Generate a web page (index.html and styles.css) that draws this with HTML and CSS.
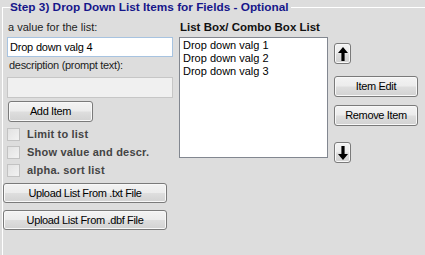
FILE: index.html
```html
<!DOCTYPE html>
<html>
<head>
<meta charset="utf-8">
<link rel="stylesheet" href="styles.css">
</head>
<body>
<div class="group">
  <div class="title">Step 3) Drop Down List Items for Fields - Optional</div>
  <div class="body">
    <div class="left">
      <div class="label lbl-value">a value for the list:</div>
      <input class="textbox" type="text" value="Drop down valg 4">
      <div class="label lbl-desc">description (prompt text):</div>
      <input class="textbox disabled" type="text" value="" disabled>
      <button class="btn btn-add">Add Item</button>
      <div class="checks">
        <div class="check"><span class="box"></span><span class="check-text">Limit to list</span></div>
        <div class="check"><span class="box"></span><span class="check-text">Show value and descr.</span></div>
        <div class="check"><span class="box"></span><span class="check-text">alpha. sort list</span></div>
      </div>
      <button class="btn btn-upload btn-upload-1">Upload List From .txt File</button>
      <button class="btn btn-upload btn-upload-2">Upload List From .dbf File</button>
    </div>
    <div class="right">
      <div class="list-title">List Box/ Combo Box List</div>
      <div class="list-row">
        <ul class="listbox">
          <li>Drop down valg 1</li>
          <li>Drop down valg 2</li>
          <li>Drop down valg 3</li>
        </ul>
        <div class="side">
          <button class="btn arrow arrow-up" aria-label="Move up">
            <svg width="10" height="14" viewBox="0 0 10 14"><polygon points="5,0 10,6 6.6,6 6.6,14 3.4,14 3.4,6 0,6" fill="#000"/></svg>
          </button>
          <button class="btn side-btn btn-edit">Item Edit</button>
          <button class="btn side-btn btn-remove">Remove Item</button>
          <button class="btn arrow arrow-down" aria-label="Move down">
            <svg width="10" height="14" viewBox="0 0 10 14"><polygon points="5,14 10,8 6.6,8 6.6,0 3.4,0 3.4,8 0,8" fill="#000"/></svg>
          </button>
        </div>
      </div>
    </div>
  </div>
</div>
</body>
</html>
```
FILE: styles.css
```css
html, body {
  margin: 0;
  padding: 0;
}
body {
  width: 425px;
  height: 255px;
  overflow: hidden;
  background: #dddddd;
  font-family: "Liberation Sans", Arial, sans-serif;
  font-size: 11px;
  line-height: 13px;
  color: #1e1e1e;
}
.group {
  margin: 7px 0 0 2px;
  border-top: 1px solid #ffffff;
  border-left: 1px solid #ffffff;
  height: 247px;
}
.title {
  width: max-content;
  margin: -7px 0 0 7px;
  padding: 0 2px 0 0;
  background: #dddddd;
  font-weight: bold;
  font-size: 11.8px;
  color: #16168a;
  line-height: 13px;
}
.body {
  display: flex;
}
.left {
  width: 172px;
  display: flex;
  flex-direction: column;
  align-items: flex-start;
}
.label {
  white-space: nowrap;
}
.lbl-value {
  margin: 7px 0 0 5px;
}
.textbox {
  box-sizing: border-box;
  width: 166px;
  height: 20px;
  margin: 3px 0 0 4px;
  padding: 0 2px;
  border: 1px solid #a7c3e0;
  background: #ffffff;
  font-family: "Liberation Sans", Arial, sans-serif;
  font-size: 11px;
  letter-spacing: -0.2px;
  color: #000000;
  outline: none;
}
.textbox.disabled {
  height: 21px;
  margin-top: 5px;
  background: #f0f0f0;
  border-color: #c6c6c6;
}
.lbl-desc {
  margin: 2px 0 0 6px;
  letter-spacing: -0.3px;
}
.btn {
  box-sizing: border-box;
  display: flex;
  align-items: center;
  justify-content: center;
  padding: 0;
  border: 1px solid #7a7a7a;
  border-radius: 3px;
  background: linear-gradient(to bottom, #f3f3f3 0%, #ececec 48%, #dedede 52%, #d2d2d2 100%);
  box-shadow: inset 0 0 0 1px #f8f8f8;
  font-family: "Liberation Sans", Arial, sans-serif;
  font-size: 11px;
  letter-spacing: -0.35px;
  line-height: 13px;
  color: #000000;
}
.btn-add {
  width: 85px;
  height: 21px;
  margin: 3px 0 0 5px;
}
.checks {
  margin: 6px 0 0 4px;
  display: flex;
  flex-direction: column;
  gap: 5px;
}
.check {
  display: flex;
  align-items: center;
  gap: 7px;
  height: 13px;
}
.box {
  box-sizing: border-box;
  width: 13px;
  height: 13px;
  border: 1px solid #c2c2c2;
  background: linear-gradient(to bottom right, #e2e2e2, #f2f2f2);
}
.check-text {
  font-weight: bold;
  font-size: 11px;
  letter-spacing: 0.2px;
  color: #444444;
  white-space: nowrap;
}
.btn-upload {
  width: 164px;
  height: 20px;
}
.btn-upload-1 {
  margin-top: 6px;
}
.btn-upload-2 {
  margin-top: 7px;
}
.right {
  margin-left: 4px;
  display: flex;
  flex-direction: column;
}
.list-title {
  margin: 7px 0 0 1px;
  font-weight: bold;
  font-size: 11.5px;
  color: #111111;
  white-space: nowrap;
}
.list-row {
  display: flex;
  margin-top: 3px;
}
.listbox {
  box-sizing: border-box;
  width: 149px;
  height: 121px;
  margin: 0;
  padding: 1px 3px;
  list-style: none;
  background: #ffffff;
  border: 1px solid #828790;
  color: #000000;
  font-size: 11px;
}
.listbox li {
  height: 13px;
  white-space: nowrap;
}
.side {
  margin-left: 6px;
  display: flex;
  flex-direction: column;
  align-items: flex-start;
}
.arrow {
  width: 17px;
  height: 21px;
}
.arrow-up {
  margin-top: 6px;
}
.arrow-down {
  margin-top: 16px;
}
.side-btn {
  width: 84px;
  height: 21px;
}
.btn-edit {
  margin-top: 12px;
}
.btn-remove {
  margin-top: 8px;
}
```
